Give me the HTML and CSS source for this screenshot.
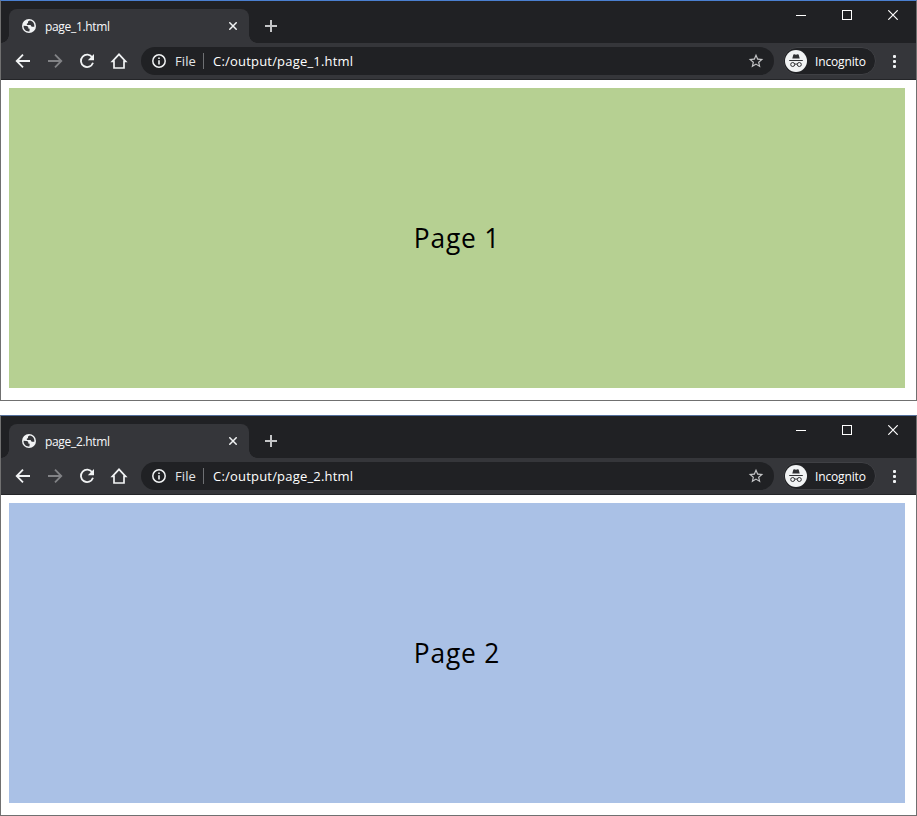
FILE: index.html
```
<!DOCTYPE html>
<html lang="en">
<head>
<meta charset="utf-8">
<title>Pages</title>
<link rel="stylesheet" href="styles.css">
</head>
<body>
<svg class="sprite" aria-hidden="true">
  <symbol id="globe" viewBox="0 0 14 14"><circle cx="7" cy="7" r="7" fill="#f1f3f4"/><path d="M1.600 6.800 4.500 7.100c1.500.2 2 .9 1.800 2.300l1.400.3-.3 2.700C3.700 12.800 1.300 10 1.600 6.800zM7.800 1.600 6 2.500v1.600L4.600 5.100l.6 1h3.300l1.200 1.700h2.600C12.800 4.600 10.800 2 7.800 1.600z" fill="#35363a"/></symbol>
  <symbol id="back" viewBox="0 0 16 16"><path d="M15 8H2M8 1.700 1.700 8 8 14.300" fill="none" stroke="currentColor" stroke-width="1.800"/></symbol>
  <symbol id="reload" viewBox="0 0 16 16"><path d="M13.300 4.400A6.200 6.200 0 1 0 14 9.800" fill="none" stroke="currentColor" stroke-width="1.800"/><path d="M15 1v6.200H8.800z" fill="currentColor"/></symbol>
  <symbol id="home" viewBox="0 0 18 18"><path d="M2.400 9.300 9 2.300l6.600 7H14V16H4V9.300z" fill="none" stroke="currentColor" stroke-width="1.700"/></symbol>
  <symbol id="info" viewBox="0 0 14 14"><circle cx="7" cy="7" r="6.200" fill="none" stroke="currentColor" stroke-width="1.500"/><path d="M7 6.200v4.300M7 3.400v1.600" stroke="currentColor" stroke-width="1.600"/></symbol>
  <symbol id="star" viewBox="1 1 22 22"><path fill="currentColor" d="M22 9.240l-7.190-.62L12 2 9.190 8.630 2 9.240l5.460 4.730L5.820 21 12 17.270 18.180 21l-1.630-7.030L22 9.240zM12 15.400l-3.760 2.270 1-4.280-3.320-2.880 4.380-.38L12 6.100l1.710 4.040 4.380.38-3.320 2.880 1 4.280L12 15.400z"/></symbol>
  <symbol id="spy" viewBox="0 0 22 22"><circle cx="11" cy="11" r="11" fill="#f1f3f4"/><path d="M7.300 8.500 8.300 4.800q.2-.6.900-.5l1.800.5 1.800-.5q.7-.1.900.5l1 3.700z" fill="#303134"/><path d="M4.200 10.500h13.600" stroke="#303134"/><g fill="none" stroke="#303134"><circle cx="7.700" cy="14.500" r="2"/><circle cx="14.300" cy="14.500" r="2"/><path d="M9.700 14.300q1.300-.7 2.600 0"/></g></symbol>
  <symbol id="cross" viewBox="0 0 10 10"><path d="M.3.3l9.400 9.400m0-9.400L.3 9.700" stroke="currentColor" stroke-width="1.200" fill="none"/></symbol>
</svg>

<section class="window first">
  <header class="tabstrip">
    <div class="tab"><svg class="globe"><use href="#globe"/></svg><span class="title">page_1.html</span><svg class="tabclose" viewBox="0 0 8 8"><path d="M.3.3l7.400 7.400m0-7.400L.3 7.700"/></svg></div>
    <svg class="plus" viewBox="0 0 12 12"><path d="M6 0v12M0 6h12"/></svg>
    <div class="controls"><i class="min"></i><i class="max"></i><svg class="close"><use href="#cross"/></svg></div>
  </header>
  <nav class="toolbar">
    <svg class="nav"><use href="#back"/></svg><svg class="nav forward"><use href="#back"/></svg><svg class="nav"><use href="#reload"/></svg><svg class="nav home"><use href="#home"/></svg>
    <div class="address"><svg class="info"><use href="#info"/></svg><span class="scheme">File</span><i class="rule"></i><span class="url">C:/output/page_1.html</span><svg class="star"><use href="#star"/></svg></div>
    <div class="incognito"><svg class="spy"><use href="#spy"/></svg><span class="mode">Incognito</span></div>
    <div class="dots"><i></i><i></i><i></i></div>
  </nav>
  <main class="view"><div class="page green"><span>Page 1</span></div></main>
</section>

<section class="window second">
  <header class="tabstrip">
    <div class="tab"><svg class="globe"><use href="#globe"/></svg><span class="title">page_2.html</span><svg class="tabclose" viewBox="0 0 8 8"><path d="M.3.3l7.400 7.400m0-7.400L.3 7.700"/></svg></div>
    <svg class="plus" viewBox="0 0 12 12"><path d="M6 0v12M0 6h12"/></svg>
    <div class="controls"><i class="min"></i><i class="max"></i><svg class="close"><use href="#cross"/></svg></div>
  </header>
  <nav class="toolbar">
    <svg class="nav"><use href="#back"/></svg><svg class="nav forward"><use href="#back"/></svg><svg class="nav"><use href="#reload"/></svg><svg class="nav home"><use href="#home"/></svg>
    <div class="address"><svg class="info"><use href="#info"/></svg><span class="scheme">File</span><i class="rule"></i><span class="url">C:/output/page_2.html</span><svg class="star"><use href="#star"/></svg></div>
    <div class="incognito"><svg class="spy"><use href="#spy"/></svg><span class="mode">Incognito</span></div>
    <div class="dots"><i></i><i></i><i></i></div>
  </nav>
  <main class="view"><div class="page blue"><span>Page 2</span></div></main>
</section>
</body>
</html>
```
FILE: styles.css
```
* { box-sizing: border-box; }
body { margin: 0; background: #fff; font-family: "Open Sans", "Noto Sans", sans-serif; overflow: hidden; }
svg { display: block; flex: none; }
.sprite { display: none; }

.window { height: 401px; border: 1px solid #707070; border-top-color: #4a7fd0; }
.second { margin-top: 14px; border-top-color: #54709c; }

.tabstrip { height: 42px; display: flex; align-items: flex-end; background: #202124; }
.tab {
  position: relative; width: 240px; height: 34px; margin-left: 8px; padding: 0 12px 0 13px;
  display: flex; align-items: center; border-radius: 8px 8px 0 0; background: #35363a; color: #f8f9fa;
}
.tab::before, .tab::after { content: ""; position: absolute; bottom: 0; width: 8px; height: 8px; }
.tab::before { left: -8px; background: radial-gradient(circle at 0 0, #202124 7.500px, #35363a 8px); }
.tab::after { right: -8px; background: radial-gradient(circle at 100% 0, #202124 7.500px, #35363a 8px); }
.globe { width: 14px; height: 14px; }
.title { margin-left: 9px; font-size: 12px; font-weight: 500; letter-spacing: -0.32px; white-space: nowrap; }
.tabclose { width: 8px; height: 8px; margin-left: auto; stroke: #f1f3f4; stroke-width: 1.500; }
.plus { width: 12px; height: 12px; margin: 0 0 11px 16px; stroke: #c4c5c7; stroke-width: 2; }
.controls { align-self: flex-start; display: flex; margin: 9px 18px 0 auto; color: #fff; }
.min { width: 10px; height: 6px; border-bottom: 1px solid #fff; }
.max { width: 10px; height: 10px; margin: 0 36px; border: 1px solid #fff; }
.close { width: 10px; height: 10px; }

.toolbar {
  height: 37px; padding-left: 14px; display: flex; align-items: center;
  background: #35363a; border-bottom: 1px solid #242528; color: #f1f3f4;
}
.nav { width: 16px; height: 16px; margin-right: 16px; }
.forward { color: #828386; transform: scaleX(-1); }
.home { width: 18px; height: 18px; margin: 0 13px 0 -1px; }
.address {
  width: 633px; height: 28px; padding: 0 10px 0 11px; display: flex; align-items: center;
  border-radius: 14px; background: #202124;
}
.info { width: 14px; height: 14px; }
.scheme { width: 28px; margin-left: 9px; font-size: 13px; color: #e3e4e6; letter-spacing: 0.1px; }
.rule { width: 1px; height: 16px; background: #6e7073; }
.url { margin-left: 9px; font-size: 13px; font-weight: 500; color: #fff; letter-spacing: 0.2px; white-space: nowrap; }
.star { width: 16px; height: 16px; margin-left: auto; color: #c4c5c7; }
.incognito {
  width: 93px; height: 28px; margin-left: 9px; padding-left: 1px; display: flex; align-items: center;
  border: 1px solid #3f4044; border-radius: 14px; background: #202124;
}
.spy { width: 22px; height: 22px; }
.mode { margin-left: 8px; font-size: 12px; font-weight: 500; color: #fff; letter-spacing: -0.15px; }
.dots { margin-left: 17px; display: grid; gap: 2px; }
.dots i { width: 3px; height: 3px; border-radius: 1px; background: #f1f3f4; }

.view { padding: 8px 11px 0 8px; }
.page {
  height: 300px; padding: 0 0 2px 1px; display: flex; align-items: center; justify-content: center;
  color: #000; font-size: 28px; line-height: 34px; letter-spacing: 0.9px;
}
.page span { transform: scaleX(0.94); }
.green { background: #b6d092; }
.blue { background: #aac1e6; }
```
